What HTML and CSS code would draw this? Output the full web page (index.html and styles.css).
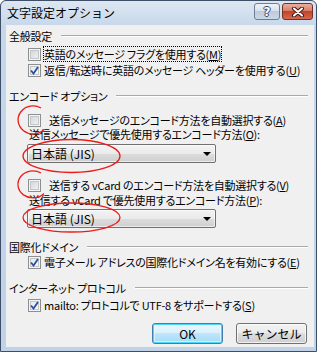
FILE: index.html
```html
<!DOCTYPE html>
<html lang="ja">
<head>
    <meta charset="UTF-8">
    <meta name="viewport" content="width=device-width, initial-scale=1.0">
    <title>文字設定オプション</title>
    <link rel="stylesheet" href="styles.css">
</head>
<body>
    <div class="window">
        <div class="titlebar">
            <span class="title">文字設定オプション</span>
            <div class="caption">
                <span class="cap-btn help">?</span>
                <span class="cap-btn close">
                    <svg viewBox="0 0 14 10" class="close-x">
                        <path d="M3 1.5 L11 8.5 M11 1.5 L3 8.5" stroke="#3a1a14" stroke-width="4" stroke-linecap="round" />
                        <path d="M3 1.5 L11 8.5 M11 1.5 L3 8.5" stroke="#fff" stroke-width="2" stroke-linecap="round" />
                    </svg>
                </span>
            </div>
        </div>

        <div class="client">
            <!-- 全般設定 -->
            <div class="group-head">
                <span>全般設定</span><i class="rule"></i>
            </div>
            <div class="opt mt-3">
                <span class="check"></span>
                <span class="focus">英語のメッセージ フラグを使用する(<u>M</u>)</span>
            </div>
            <div class="opt mt-2">
                <span class="check checked">
                    <svg viewBox="0 0 11 11"><path d="M2 5.5 L4.5 8.5 L9 2" fill="none" stroke="#2b4f9e" stroke-width="1.8" /></svg>
                </span>
                <span>返信/転送時に英語のメッセージ ヘッダーを使用する(<u>U</u>)</span>
            </div>

            <!-- エンコード オプション -->
            <div class="group-head mt-11">
                <span>エンコード オプション</span><i class="rule"></i>
            </div>
            <div class="opt opt-wide mt-9">
                <span class="check"></span>
                <span>送信メッセージのエンコード方法を自動選択する(<u>A</u>)</span>
            </div>
            <div class="field-label">送信メッセージで優先使用するエンコード方法(<u>O</u>):</div>
            <div class="combo mt-3">
                <span>日本語 (JIS)</span>
                <i class="arrow"></i>
            </div>
            <div class="opt opt-wide mt-15">
                <span class="check"></span>
                <span>送信する vCard のエンコード方法を自動選択する(<u>V</u>)</span>
            </div>
            <div class="field-label mt-1">送信する vCard で優先使用するエンコード方法(<u>P</u>):</div>
            <div class="combo mt-2">
                <span>日本語 (JIS)</span>
                <i class="arrow"></i>
            </div>

            <!-- 国際化ドメイン -->
            <div class="group-head mt-11">
                <span>国際化ドメイン</span><i class="rule"></i>
            </div>
            <div class="opt">
                <span class="check checked">
                    <svg viewBox="0 0 11 11"><path d="M2 5.5 L4.5 8.5 L9 2" fill="none" stroke="#2b4f9e" stroke-width="1.8" /></svg>
                </span>
                <span>電子メール アドレスの国際化ドメイン名を有効にする(<u>E</u>)</span>
            </div>

            <!-- インターネット プロトコル -->
            <div class="group-head mt-11">
                <span>インターネット プロトコル</span><i class="rule"></i>
            </div>
            <div class="opt mt-2">
                <span class="check checked">
                    <svg viewBox="0 0 11 11"><path d="M2 5.5 L4.5 8.5 L9 2" fill="none" stroke="#2b4f9e" stroke-width="1.8" /></svg>
                </span>
                <span>mailto: プロトコルで UTF-8 をサポートする(<u>S</u>)</span>
            </div>

            <div class="actions">
                <button class="btn btn-default">OK</button>
                <button class="btn">キャンセル</button>
            </div>
        </div>

        <!-- red marks drawn over the screenshot -->
        <svg class="marks" viewBox="0 0 318 352">
            <path d="M41 108 A15 14 0 1 0 44 129.5" />
            <ellipse cx="71.5" cy="156" rx="48.5" ry="16.5" />
            <path d="M41 173 A15 13.5 0 1 0 44 193.5" />
            <ellipse cx="71.5" cy="217.5" rx="48.5" ry="14.5" />
        </svg>
    </div>
</body>
</html>
```

FILE: styles.css
```css
body {
    margin: 0;
    background-color: #fff;
    font-family: "Noto Sans CJK JP", sans-serif;
    font-size: 12px;
    color: #000;
}

.window {
    position: relative;
    width: 315px;
    height: 350px;
    border: 1px solid #3d4e66;
    border-radius: 6px 6px 0 0;
    background: linear-gradient(#dde7f2, #c6d7ea 26px, #bfd2e8);
    display: flex;
    flex-direction: column;
}

.titlebar {
    height: 24px;
    display: flex;
    align-items: flex-start;
    padding: 0 3px 0 6px;
}

.title {
    line-height: 24px;
    font-size: 12px;
}

.caption {
    margin-left: auto;
    margin-top: 2px;
    display: flex;
    gap: 2px;
}

.cap-btn {
    height: 17px;
    box-sizing: border-box;
    border-radius: 3px;
    display: flex;
    align-items: center;
    justify-content: center;
}

.help {
    width: 26px;
    border: 1px solid #6c7d94;
    background: linear-gradient(#eef3f9 0, #d6e0ec 50%, #bccbdc 50%, #cbd8e6 100%);
    font-family: "DejaVu Sans", sans-serif;
    font-weight: bold;
    font-size: 12px;
    color: #fff;
    text-shadow: 1px 0 0 #3b4657, -1px 0 0 #3b4657, 0 1px 0 #3b4657, 0 -1px 0 #3b4657;
}

.close {
    width: 31px;
    border: 1px solid #6e3326;
    background: linear-gradient(#eab0a2 0, #d9775f 50%, #c2432a 50%, #d4684e 100%);
}

.close-x {
    width: 14px;
    height: 10px;
}

.client {
    flex: 1;
    margin: 0 2px 4px 5px;
    padding: 3px 6px 0 3px;
    background-color: #f0f0f0;
    box-sizing: border-box;
    font-size: 11px;
    line-height: 14px;
    letter-spacing: -0.25px;
    font-feature-settings: "palt";
}

.group-head {
    height: 16px;
    display: flex;
    align-items: center;
    gap: 9px;
    white-space: nowrap;
}

.group-head .rule {
    flex: 1;
    border-top: 1px solid #a9a9a9;
    border-bottom: 1px solid #fff;
}

.opt {
    height: 14px;
    display: flex;
    align-items: center;
    gap: 3px;
    padding-left: 19px;
    white-space: nowrap;
}

.opt-wide {
    gap: 8px;
}

.check {
    width: 13px;
    height: 13px;
    flex: none;
    box-sizing: border-box;
    border: 1px solid #8e8f8f;
    background: linear-gradient(135deg, #cdd1d6, #f6f6f6);
    box-shadow: inset 0 0 0 1px #f4f4f4, inset 0 0 0 2px #c3c6ca;
    display: flex;
    align-items: center;
    justify-content: center;
}

.check svg {
    width: 11px;
    height: 11px;
}

.checked {
    background: linear-gradient(135deg, #e2e5e9, #fbfbfb);
}

.focus {
    outline: 1px dotted #000;
    outline-offset: 0;
}

u {
    text-decoration-thickness: 1px;
    text-underline-offset: 1px;
}

.field-label {
    height: 14px;
    padding-left: 20px;
    white-space: nowrap;
}

.combo {
    width: 189px;
    height: 19px;
    margin-left: 18px;
    box-sizing: border-box;
    border: 1px solid #707070;
    border-radius: 2px;
    background: linear-gradient(#f3f3f3 0, #ebebeb 50%, #dddddd 50%, #cfcfcf 100%);
    box-shadow: inset 0 0 0 1px rgba(255, 255, 255, 0.6);
    display: flex;
    align-items: center;
    padding: 0 4px 0 3px;
    font-size: 12px;
    letter-spacing: 0;
}

.combo .arrow {
    margin-left: auto;
    width: 0;
    height: 0;
    border-left: 4px solid transparent;
    border-right: 4px solid transparent;
    border-top: 4px solid #000;
}

.actions {
    display: flex;
    justify-content: flex-end;
    gap: 13px;
    margin-top: 11px;
    padding-right: 1px;
}

.btn {
    width: 71px;
    height: 21px;
    padding: 0;
    font-family: inherit;
    font-size: 12px;
    letter-spacing: 0;
    color: #000;
    border: 1px solid #707070;
    border-radius: 3px;
    background: linear-gradient(#f2f2f2 0, #ebebeb 50%, #dddddd 50%, #cfcfcf 100%);
    box-shadow: inset 0 0 0 1px rgba(255, 255, 255, 0.7);
}

.btn-default {
    border-color: #3c7fb1;
    background: linear-gradient(#eaf6fd 0, #d9f0fc 50%, #bee6fd 50%, #a7d9f5 100%);
    box-shadow: inset 0 0 0 1px #48d7fb, inset 0 0 0 2px rgba(255, 255, 255, 0.5);
}

.marks {
    position: absolute;
    top: -1px;
    left: -1px;
    width: 318px;
    height: 352px;
    pointer-events: none;
    fill: none;
    stroke: #ee1a1a;
    stroke-width: 1.3;
}

.mt-1 { margin-top: 1px; }
.mt-2 { margin-top: 2px; }
.mt-3 { margin-top: 3px; }
.mt-9 { margin-top: 9px; }
.mt-11 { margin-top: 11px; }
.mt-15 { margin-top: 15px; }
```
